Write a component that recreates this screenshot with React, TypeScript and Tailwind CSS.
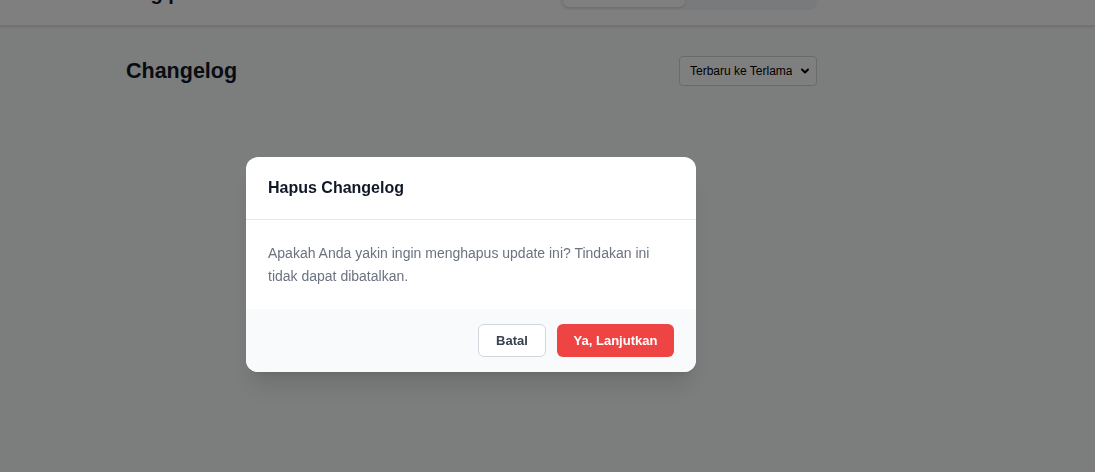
import { ChevronDown } from "lucide-react";

export default function App() {
  return (
    <div
      className="relative min-h-screen h-[472px] overflow-hidden bg-[#f9fafb]"
      style={{ fontFamily: '"Liberation Sans", Arial, sans-serif' }}
    >
      {/* Header (page is scrolled, only the bottom shows) */}
      <header className="h-[26px] overflow-hidden bg-white border-b border-gray-200 shadow-sm">
        <div className="ml-[126px] w-[691px] -mt-[30px] flex items-start justify-between">
          <h1 className="mt-[9px] text-xl font-bold leading-7 text-gray-900">
            Log pembaruan
          </h1>
          <div className="flex h-[40px] w-[257px] rounded-lg bg-gray-100 p-[3px]">
            <div className="w-[122px] rounded-md bg-white shadow" />
            <div className="flex-1" />
          </div>
        </div>
      </header>

      {/* Main */}
      <main className="ml-[126px] w-[691px] pt-[30px]">
        <div className="flex items-center justify-between">
          <h2 className="text-[21.5px] font-bold leading-[30px] text-gray-900">
            Changelog
          </h2>
          <div className="relative">
            <select
              defaultValue="desc"
              className="h-[30px] w-[138px] appearance-none rounded border border-gray-300 bg-white pl-[10px] pr-6 text-xs text-black"
              style={{ fontFamily: '"Liberation Sans", Arial, sans-serif' }}
            >
              <option value="desc">Terbaru ke Terlama</option>
              <option value="asc">Terlama ke Terbaru</option>
            </select>
            <ChevronDown
              className="pointer-events-none absolute right-[6px] top-[9px] h-3 w-3 text-black"
              strokeWidth={4}
            />
          </div>
        </div>
      </main>

      {/* Overlay + dialog */}
      <div className="fixed inset-0 bg-black/50">
        <div className="ml-[246px] mt-[157px] w-[450px] overflow-hidden rounded-xl bg-white shadow-xl">
          <div className="border-b border-gray-200 px-[22px] py-[19px]">
            <h3 className="text-base font-bold leading-6 text-gray-900">
              Hapus Changelog
            </h3>
          </div>
          <div className="px-[22px] pt-[22px] pb-[21px]">
            <p className="text-sm leading-[23px] text-[#6b7280]">
              Apakah Anda yakin ingin menghapus update ini? Tindakan ini tidak
              dapat dibatalkan.
            </p>
          </div>
          <div className="flex justify-end gap-[11px] bg-[#f9fafb] px-[22px] py-[15px]">
            <button className="h-[33px] w-[68px] rounded-md border border-gray-300 bg-white text-[13px] font-semibold text-[#374151]">
              Batal
            </button>
            <button className="h-[33px] w-[117px] rounded-md bg-[#ef4444] text-[13px] font-bold text-white">
              Ya, Lanjutkan
            </button>
          </div>
        </div>
      </div>
    </div>
  );
}
